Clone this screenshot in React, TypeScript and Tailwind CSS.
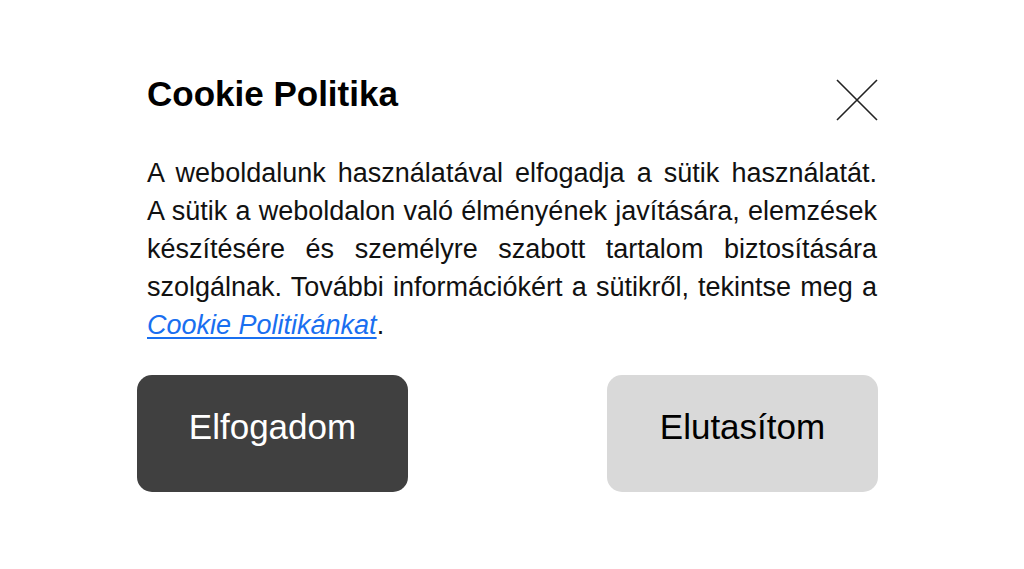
import React from 'react'

const lines = [
    'A weboldalunk használatával elfogadja a sütik használatát.',
    'A sütik a weboldalon való élményének javítására, elemzések',
    'készítésére és személyre szabott tartalom biztosítására',
    'szolgálnak. További információkért a sütikről, tekintse meg a',
]

const App = () => {
    return (
        <div className="w-[1024px] h-[569px] bg-white font-['Liberation_Sans',Arial,sans-serif] text-black">
            <div className="ml-[137px] w-[741px] pt-[74px]">
                <div className="flex justify-between items-start pl-[10px] h-[47px]">
                    <h1 className="text-[35px] leading-[40px] font-bold">Cookie Politika</h1>
                    <svg width="42" height="42" viewBox="0 0 42 42" className="mt-[5px]">
                        <path d="M1 1 L41 41 M41 1 L1 41" stroke="#222" strokeWidth="1.6" fill="none" />
                    </svg>
                </div>
                <div className="mt-[33px] pl-[10px] pr-[1px] text-[27px] leading-[38px] text-[#111]">
                    {lines.map((l) => (
                        <div key={l} className="text-justify [text-align-last:justify]">
                            {l}
                        </div>
                    ))}
                    <div>
                        <a href="#" className="italic underline text-[#1a6ff0] underline-offset-[3px]">
                            Cookie Politikánkat
                        </a>
                        .
                    </div>
                </div>
                <div className="mt-[31px] flex justify-between">
                    <button className="w-[271px] h-[117px] pb-[12px] rounded-[15px] bg-[#404040] text-white text-[35px]">
                        Elfogadom
                    </button>
                    <button className="w-[271px] h-[117px] pb-[12px] rounded-[15px] bg-[#d9d9d9] text-black text-[35px]">
                        Elutasítom
                    </button>
                </div>
            </div>
        </div>
    )
}

export default App
